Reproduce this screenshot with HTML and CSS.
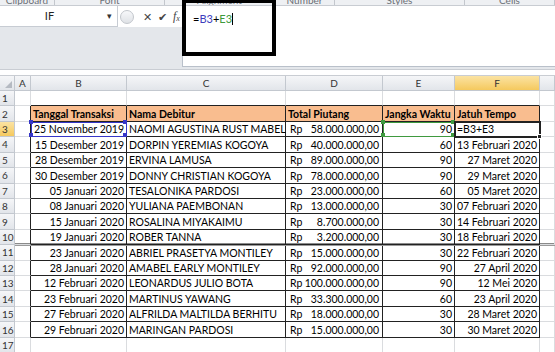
FILE: index.html
```html
<!DOCTYPE html>
<html lang="id">
<head>
  <meta charset="UTF-8" />
  <meta name="viewport" content="width=device-width, initial-scale=1.0" />
  <title>Piutang</title>
  <link rel="stylesheet" href="styles.css">
</head>
<body>
  <div class="ribbon">
    <span style="width:55px">Clipboard</span>
    <span style="width:110px">Font</span>
    <span style="width:110px">Alignment</span>
    <span style="width:60px">Number</span>
    <span style="width:130px">Styles</span>
    <span style="width:90px">Cells</span>
  </div>
  <div class="top">
    <div class="left">
      <div class="namerow">
        <div class="namebox">IF<span class="drop">&#9662;</span></div>
        <div class="fbtns">
          <span class="pill"></span>
          <span class="x">&#10005;</span>
          <span class="ok">&#10004;</span>
          <span class="fx">f<sub>x</sub></span>
        </div>
      </div>
    </div>
    <div class="fbar">=<span class="rb">B3</span>+<span class="rg">E3</span><span class="caret"></span></div>
    <div class="mark"></div>
  </div>
  <div id="sheet" class="sheet"></div>
  <script>
    var rows = [
      ['25 November 2019', 'NAOMI AGUSTINA RUST MABEL', '58.000.000,00', 90, '=B3+E3'],
      ['15 Desember 2019', 'DORPIN YEREMIAS KOGOYA', '40.000.000,00', 60, '13 Februari 2020'],
      ['28 Desember 2019', 'ERVINA LAMUSA', '89.000.000,00', 90, '27 Maret 2020'],
      ['30 Desember 2019', 'DONNY CHRISTIAN KOGOYA', '78.000.000,00', 90, '29 Maret 2020'],
      ['05 Januari 2020', 'TESALONIKA PARDOSI', '23.000.000,00', 60, '05 Maret 2020'],
      ['08 Januari 2020', 'YULIANA PAEMBONAN', '13.000.000,00', 30, '07 Februari 2020'],
      ['15 Januari 2020', 'ROSALINA MIYAKAIMU', '8.700.000,00', 30, '14 Februari 2020'],
      ['19 Januari 2020', 'ROBER TANNA', '3.200.000,00', 30, '18 Februari 2020'],
      ['23 Januari 2020', 'ABRIEL PRASETYA MONTILEY', '15.000.000,00', 30, '22 Februari 2020'],
      ['28 Januari 2020', 'AMABEL EARLY MONTILEY', '92.000.000,00', 90, '27 April 2020'],
      ['12 Februari 2020', 'LEONARDUS JULIO BOTA', '100.000.000,00', 90, '12 Mei 2020'],
      ['23 Februari 2020', 'MARTINUS YAWANG', '33.300.000,00', 60, '23 April 2020'],
      ['27 Februari 2020', 'ALFRILDA MALTILDA BERHITU', '18.000.000,00', 30, '28 Maret 2020'],
      ['29 Februari 2020', 'MARINGAN PARDOSI', '15.000.000,00', 30, '30 Maret 2020']
    ];
    var heads = ['Tanggal Transaksi', 'Nama Debitur', 'Total Piutang', 'Jangka Waktu', 'Jatuh Tempo'];
    var marks = '<b class="q q1"></b><b class="q q2"></b><b class="q q3"></b><b class="q q4"></b>';
    var html = '<div class="hd corner"><i></i></div>';
    ['A', 'B', 'C', 'D', 'E', 'F', ''].forEach(function (c) {
      html += '<div class="hd' + (c === 'F' ? ' sel' : '') + '">' + c + '</div>';
    });

    function cell(cls, txt) {
      return '<div class="c ' + cls + '">' + txt + '</div>';
    }

    for (var r = 1; r <= 17; r++) {
      var seam = r === 10 ? ' seam' : '';
      html += '<div class="rh' + (r === 3 ? ' sel' : '') + '">' + r + '</div>';
      html += cell((r >= 2 && r <= 16 ? 'edge' : '') + seam, '');
      if (r === 1) {
        for (var k = 0; k < 5; k++) html += cell('above', '');
      } else if (r === 2) {
        heads.forEach(function (h) { html += cell('t head', h); });
      } else if (r <= 16) {
        var d = rows[r - 3];
        var first = r === 3;
        html += cell('t right' + seam + (first ? ' refb' : ''), d[0] + (first ? marks : ''));
        html += cell('t' + seam, d[1]);
        html += cell('t money' + seam, '<span>Rp</span><span>' + d[2] + '</span>');
        html += cell('t right' + seam + (first ? ' refg' : ''), d[3] + (first ? marks : ''));
        html += cell('t' + seam + (first ? ' active' : ' right'), d[4] + (first ? '<b class="handle"></b>' : ''));
      } else {
        for (var k = 0; k < 5; k++) html += cell('', '');
      }
      html += cell('last' + seam, '');
    }
    document.getElementById('sheet').innerHTML = html;
  </script>
</body>
</html>
```

FILE: styles.css
```css
* { box-sizing: border-box; }
body {
  margin: 0;
  width: 555px;
  height: 352px;
  overflow: hidden;
  background: #fff;
  font-family: Lato, "Open Sans", sans-serif;
  color: #000;
}

/* ribbon group labels, cut off at the top */
.ribbon {
  height: 6px;
  display: flex;
  align-items: flex-end;
  overflow: hidden;
  background: #eef0f3;
  border-bottom: 1px solid #c8ccd2;
}
.ribbon span {
  flex: none;
  font-size: 10px;
  line-height: 9px;
  color: #6b6f76;
  text-align: center;
  border-right: 1px solid #c3c7cd;
}

.top {
  position: relative;
  display: flex;
  height: 64px;
  background: #e4e7eb;
  border-bottom: 1px solid #c9cdd3;
}
.left { width: 182px; flex: none; }
.namerow { display: flex; height: 21px; }
.namebox {
  width: 118px;
  background: #fff;
  border-right: 1px solid #c7ccd3;
  border-bottom: 1px solid #c7ccd3;
  position: relative;
  font-size: 11px;
  line-height: 20px;
  text-align: center;
  padding-right: 18px;
  color: #222;
}
.drop {
  position: absolute;
  right: 5px;
  top: 0;
  font-size: 9px;
  color: #333;
}
.fbtns {
  flex: 1;
  display: flex;
  align-items: center;
  gap: 6px;
  padding-left: 2px;
  background: #fff;
}
.pill {
  width: 14px;
  height: 14px;
  border-radius: 50%;
  border: 1px solid #c2c6cc;
  background: linear-gradient(#f7f8fa, #dfe2e6);
}
.x { font-size: 11px; color: #444; margin-left: 3px; }
.ok { font-size: 11px; color: #444; }
.fx {
  font-family: "Liberation Serif", serif;
  font-style: italic;
  font-size: 12px;
  color: #444;
}
.fx sub { font-size: 8px; vertical-align: -1px; }

.fbar {
  flex: 1;
  background: #fff;
  height: 61px;
  border-left: 1px solid #b9c0ca;
  border-bottom: 1px solid #b9c0ca;
  padding: 6px 0 0 10px;
  font-size: 11px;
  line-height: 14px;
}
.rb { color: #3d3dbd; }
.rg { color: #3c9a3c; }
.caret {
  display: inline-block;
  width: 1px;
  height: 12px;
  background: #000;
  vertical-align: -2px;
}
/* annotation box drawn over the formula bar */
.mark {
  position: absolute;
  left: 182px;
  top: -7px;
  width: 94px;
  height: 57px;
  border: 4px solid #000;
}

.sheet {
  margin-top: 5px;
  display: grid;
  grid-template-columns: 15px 16px 96px 159px 97px 72px 85px 15px;
  grid-template-rows: 15px repeat(17, 15.43px);
  font-size: 10.5px;
  border-top: 1px solid #c9cdd3;
}
.hd, .rh {
  background: linear-gradient(#f5f6f8, #e2e5ea);
  border-right: 1px solid #c3c8cf;
  border-bottom: 1px solid #c3c8cf;
  color: #333;
  font-size: 10px;
  display: flex;
  align-items: center;
  justify-content: center;
}
.rh { justify-content: flex-start; padding-left: 2px; }
.hd.sel, .rh.sel { background: linear-gradient(#fbe3a3, #f5c95e); }
.corner { position: relative; }
.corner i {
  position: absolute;
  right: 2px;
  bottom: 2px;
  border-left: 7px solid transparent;
  border-bottom: 7px solid #b5bac2;
}
.c {
  position: relative;
  border-right: 1px solid #dadcdf;
  border-bottom: 1px solid #dadcdf;
  padding: 0 2px;
  white-space: nowrap;
  display: flex;
  align-items: flex-end;
  line-height: 13px;
}
.c.above { border-bottom-color: #222; }
.c.edge { border-right-color: #222; }
.c.t { border-right-color: #222; border-bottom-color: #222; }
.c.seam { box-shadow: inset 0 -1px #8a8a8a, 0 1px #9a9a9a; z-index: 1; }
.c.head { background: #f9bd8f; font-weight: bold; }
.c.right { justify-content: flex-end; }
.c.money { justify-content: space-between; padding: 0 3px 0 4px; }
.c.refb { outline: 1px solid #3636c8; outline-offset: -1px; }
.c.refg { outline: 1px solid #3f9a3f; outline-offset: -1px; }
.c.refb .q { background: #3636c8; }
.c.refg .q { background: #3f9a3f; }
.q { position: absolute; width: 4px; height: 4px; }
.q1 { left: -2px; top: -2px; }
.q2 { right: -1px; top: -2px; }
.q3 { left: -2px; bottom: -1px; }
.q4 { right: -1px; bottom: -1px; }
.c.active { outline: 2px solid #222; outline-offset: -1px; z-index: 2; }
.handle {
  position: absolute;
  right: -3px;
  bottom: -3px;
  width: 5px;
  height: 5px;
  background: #222;
  border: 1px solid #fff;
}
```
